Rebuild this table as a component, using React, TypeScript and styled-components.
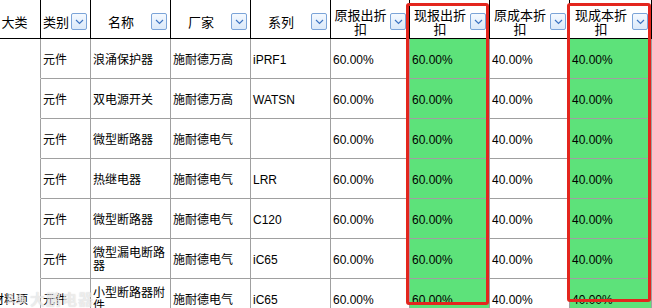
import styled, { createGlobalStyle } from 'styled-components';

const GlobalStyle = createGlobalStyle`
  html, body {
    margin: 0;
    padding: 0;
    background: #ffffff;
  }
`;

const COLUMNS = [
  { key: 'big', label: '大类', width: 49, filter: false },
  { key: 'kind', label: '类别', width: 50, filter: true },
  { key: 'name', label: '名称', width: 80, filter: true },
  { key: 'maker', label: '厂家', width: 80, filter: true },
  { key: 'series', label: '系列', width: 80, filter: true },
  { key: 'oldSale', label: '原报出折扣', width: 79, filter: true },
  { key: 'newSale', label: '现报出折扣', width: 80, filter: true, green: true },
  { key: 'oldCost', label: '原成本折扣', width: 80, filter: true },
  { key: 'newCost', label: '现成本折扣', width: 82, filter: true, green: true },
];

type Row = string[];

// 대류 열은 병합 셀이라 마지막 행에만 글자가 보임
const ROWS: Row[] = [
  ['', '元件', '浪涌保护器', '施耐德万高', 'iPRF1', '60.00%', '60.00%', '40.00%', '40.00%'],
  ['', '元件', '双电源开关', '施耐德万高', 'WATSN', '60.00%', '60.00%', '40.00%', '40.00%'],
  ['', '元件', '微型断路器', '施耐德电气', '', '60.00%', '60.00%', '40.00%', '40.00%'],
  ['', '元件', '热继电器', '施耐德电气', 'LRR', '60.00%', '60.00%', '40.00%', '40.00%'],
  ['', '元件', '微型断路器', '施耐德电气', 'C120', '60.00%', '60.00%', '40.00%', '40.00%'],
  ['', '元件', '微型漏电断路器', '施耐德电气', 'iC65', '60.00%', '60.00%', '40.00%', '40.00%'],
  ['材料项', '元件', '小型断路器附件', '施耐德电气', 'iC65', '60.00%', '60.00%', '40.00%', '40.00%'],
];

function FilterIcon() {
  return (
    <svg width='9' height='6' viewBox='0 0 9 6'>
      <polyline points='1,1 4.5,4.5 8,1' fill='none' stroke='#3d74c2' strokeWidth='1.2' />
    </svg>
  );
}

export default function App() {
  return (
    <Page>
      <GlobalStyle />
      <Sheet>
        {COLUMNS.map((col) => (
          <HeaderCell key={col.key}>
            <HeaderLabel>{col.label}</HeaderLabel>
            {col.filter && (
              <FilterButton>
                <FilterIcon />
              </FilterButton>
            )}
          </HeaderCell>
        ))}
        {ROWS.map((row, r) =>
          row.map((value, c) => (
            <Cell key={`${r}-${c}`} $green={!!COLUMNS[c].green} $merged={c === 0}>
              {value}
            </Cell>
          ))
        )}
      </Sheet>

      <Highlight $left={406} $width={83} $height={302} />
      <Highlight $left={567} $width={84} $height={299} />

      <Watermark>
        <span className='logo'>头条</span>
        <span className='name'>大鹏电器</span>
      </Watermark>
    </Page>
  );
}

const Page = styled.div`
  position: relative;
  width: 652px;
  height: 308px;
  overflow: hidden;
  background: #ffffff;
`;

const Sheet = styled.div`
  display: grid;
  grid-template-columns: ${COLUMNS.map((c) => `${c.width}px`).join(' ')};
  grid-template-rows: 39px repeat(${ROWS.length}, 40px);
  margin-left: -8px;
  color: #000000;
`;

const HeaderCell = styled.div`
  box-sizing: border-box;
  display: flex;
  align-items: center;
  border-right: 1px solid #000000;
  border-bottom: 1px solid #000000;
  padding: 3px 3px 0 0;
  background: #ffffff;
`;

const HeaderLabel = styled.div`
  flex: 1;
  text-align: center;
  font-family: 'Noto Sans CJK SC', sans-serif;
  font-size: 13px;
  line-height: 14px;
  margin-top: 2px;
`;

const FilterButton = styled.div`
  box-sizing: border-box;
  flex: 0 0 16px;
  height: 17px;
  display: flex;
  align-items: center;
  justify-content: center;
  border: 1px solid #7ba4d8;
  border-radius: 2px;
  background: linear-gradient(#f4f9ff, #dbe9f9);
  margin-top: 2px;
`;

const Cell = styled.div<{ $green: boolean; $merged: boolean }>`
  box-sizing: border-box;
  display: flex;
  align-items: center;
  padding: 3px 2px 0 ${(p) => (p.$merged ? '0' : '2px')};
  border-right: 1px solid #a0a0a0;
  border-bottom: 1px solid ${(p) => (p.$merged ? 'transparent' : '#a0a0a0')};
  background: ${(p) => (p.$green ? '#5de27a' : '#ffffff')};
  font-family: 'Liberation Sans', 'Noto Sans CJK SC', sans-serif;
  font-size: 12px;
  line-height: 13px;
  white-space: ${(p) => (p.$merged ? 'nowrap' : 'normal')};
  overflow: hidden;
  word-break: break-all;
`;

const Highlight = styled.div<{ $left: number; $width: number; $height: number }>`
  position: absolute;
  top: 3px;
  left: ${(p) => p.$left}px;
  width: ${(p) => p.$width}px;
  height: ${(p) => p.$height}px;
  box-sizing: border-box;
  border: 3px solid #e3261e;
  border-radius: 3px;
  pointer-events: none;
`;

const Watermark = styled.div`
  position: absolute;
  left: 6px;
  top: 288px;
  display: flex;
  align-items: center;
  gap: 4px;
  font-family: 'Noto Sans CJK SC', sans-serif;
  font-weight: 700;
  color: rgba(255, 255, 255, 0.6);
  text-shadow: 0 0 1px rgba(140, 140, 140, 0.45);
  pointer-events: none;

  .logo {
    font-size: 10px;
  }

  .name {
    font-size: 15px;
    letter-spacing: 1px;
  }
`;
